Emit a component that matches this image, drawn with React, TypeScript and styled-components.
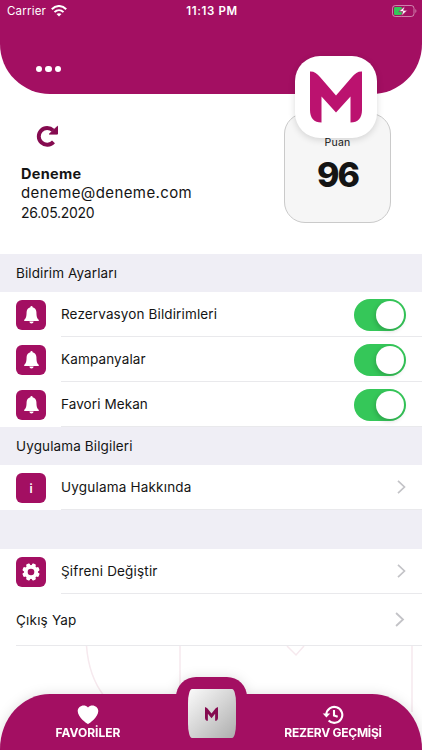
import React from "react";
import styled, { createGlobalStyle } from "styled-components";

const BRAND = "#a30f62";

const GlobalStyle = createGlobalStyle`
  *, *::before, *::after { box-sizing: border-box; }
  body { margin: 0; background: #fff; overflow: hidden; }
`;

const Screen = styled.div`
  width: 422px;
  height: 750px;
  display: flex;
  flex-direction: column;
  overflow: hidden;
  background: #fff;
  color: #141414;
  font-family: Inter, "Liberation Sans", sans-serif;
`;

const Text = styled.span<{ $size: number; $weight?: number; $spacing?: number; $line?: number }>`
  font-size: ${(p) => p.$size}px;
  font-weight: ${(p) => p.$weight ?? 400};
  letter-spacing: ${(p) => p.$spacing ?? 0}px;
  line-height: ${(p) => (p.$line ? `${p.$line}px` : "normal")};
  white-space: nowrap;
`;

const Header = styled.header`
  flex: none;
  height: 94px;
  border-radius: 0 0 50px 50px;
  background: ${BRAND};
  color: #fff;
`;

const StatusBar = styled.div`
  height: 22px;
  display: grid;
  grid-template-columns: 1fr auto 1fr;
  align-items: center;
  padding: 0 5px 0 7px;
`;

const Carrier = styled.div`
  display: flex;
  align-items: center;
  gap: 5px;
`;

const Battery = styled.svg`
  justify-self: end;
`;

const MenuDots = styled.div`
  display: flex;
  gap: 3px;
  padding: 44px 0 0 36px;
`;

const Dot = styled.i`
  width: 6.3px;
  height: 6.3px;
  border-radius: 50%;
  background: #fff;
`;

const Profile = styled.section`
  flex: none;
  height: 160px;
  display: flex;
  justify-content: space-between;
  padding: 0 31px 0 21px;
`;

const Person = styled.div`
  display: flex;
  flex-direction: column;
  padding-top: 31px;
`;

const Refresh = styled.svg`
  margin: 0 0 17px 15px;
`;

const Score = styled.div`
  position: relative;
  width: 107px;
  height: 110px;
  margin-top: 19px;
  padding-top: 22px;
  border: 1px solid #cacaca;
  border-radius: 21px;
  background: #f6f6f6;
  display: flex;
  flex-direction: column;
  align-items: center;
`;

const AppBadge = styled.div`
  position: absolute;
  top: -58px;
  left: 10px;
  width: 82px;
  height: 82px;
  border-radius: 25px;
  background: #fff;
  box-shadow: 0 2px 7px rgba(0, 0, 0, 0.14);
  display: grid;
  place-items: center;
`;

const SectionTitle = styled.h2<{ $height: number }>`
  flex: none;
  height: ${(p) => p.$height}px;
  margin: 0;
  padding-left: 16px;
  display: flex;
  align-items: center;
  background: #efeef5;
`;

const Row = styled.div<{ $height: number }>`
  flex: none;
  height: ${(p) => p.$height}px;
  display: flex;
  padding-left: 16px;
  background: #fff;
`;

const Tile = styled.div`
  width: 30px;
  height: 30px;
  margin: 8px 15px 0 0;
  border-radius: 6px;
  background: ${BRAND};
  color: #fff;
  display: grid;
  place-items: center;
`;

const RowBody = styled.div<{ $end?: number }>`
  flex: 1;
  display: flex;
  align-items: center;
  justify-content: space-between;
  padding-right: ${(p) => p.$end ?? 16}px;
  border-bottom: 1px solid #e9e9ec;
`;

const Switch = styled.div`
  width: 52px;
  height: 32px;
  margin-top: 1px;
  padding: 2px;
  border-radius: 16px;
  background: #35c759;
  display: flex;
  justify-content: flex-end;
`;

const Knob = styled.div`
  width: 28px;
  height: 28px;
  border-radius: 50%;
  background: #fff;
  box-shadow: -1px 2px 5px rgba(0, 0, 0, 0.18);
`;

const Footer = styled.footer`
  position: relative;
  flex: 1;
  display: flex;
  flex-direction: column;
  justify-content: flex-end;
`;

const Pattern = styled.svg`
  position: absolute;
  inset: 0;
`;

const TabBar = styled.nav`
  position: relative;
  height: 56px;
  border-radius: 50px 50px 0 0 / 55px 55px 0 0;
  background: ${BRAND};
  color: #fff;
  display: grid;
  grid-template-columns: 176px 71px 1fr;
  filter: drop-shadow(0 0 6px rgba(0, 0, 0, 0.12));
`;

const Tab = styled.div<{ $shift?: number }>`
  display: flex;
  flex-direction: column;
  align-items: center;
  padding-top: 11px;
  padding-right: ${(p) => p.$shift ?? 0}px;
`;

const HomeTab = styled.div`
  height: 73px;
  margin-top: -17px;
  padding-top: 12px;
  border-radius: 20px 20px 0 0;
  background: ${BRAND};
  display: flex;
  justify-content: center;
`;

const HomeTile = styled.div`
  width: 48px;
  height: 49px;
  border-radius: 4px / 14px;
  background: linear-gradient(135deg, #f7f7f7 5%, #d6d6d6 48%, #adadad 100%);
  display: grid;
  place-items: center;
`;

const BrandM = ({ width, height, fill }: { width: number; height: number; fill: string }) => (
  <svg width={width} height={height} viewBox="0 0 52 52" preserveAspectRatio="none">
    <path
      fill={fill}
      d="M0 .5C4 .3 7 2.300 10 6L26 24.500 42 6C45 2.300 48 .3 52 .5V39C52 47 48 51.500 40.500 51.500V25.500L26 41.500 11.500 25.500V51.500C4 51.500 0 47 0 39Z"
    />
  </svg>
);

const Bell = () => (
  <svg width="15" height="18" viewBox="0 0 15 18" fill="#fff">
    <path d="M7.500 0a1.100 1.100 0 0 0-1.100 1.200C3.900 1.700 2.700 3.700 2.600 6.100c-.1 4.500-.5 6.300-2.300 7.700-.5.500-.2 1.100.4 1.100h13.600c.6 0 .9-.6.4-1.100-1.800-1.400-2.200-3.200-2.300-7.700-.1-2.400-1.300-4.400-3.800-4.900A1.100 1.100 0 0 0 7.500 0Z" />
    <path d="M5.400 15.600h4.200c-.1 1.200-.9 2-2.100 2s-2-.8-2.100-2Z" />
  </svg>
);

const Gear = () => (
  <svg width="18" height="18" viewBox="-9 -9 18 18">
    <g fill="#fff">
      {[22.5, 67.5, 112.5, 157.5].map((angle) => (
        <rect key={angle} x="-2" y="-8.700" width="4" height="17.400" rx="1.100" transform={`rotate(${angle})`} />
      ))}
      <circle r="7.100" />
    </g>
    <circle r="3.300" fill={BRAND} />
  </svg>
);

const Chevron = ({ size = 14 }: { size?: number }) => (
  <svg width={size * 0.64} height={size} viewBox="0 0 9 14" fill="none" stroke="#c3c3c7" strokeWidth="1.700">
    <path d="M1 .9 7.500 7 1 13.100" />
  </svg>
);

const switches = [
  { label: "Rezervasyon Bildirimleri", spacing: 0.13 },
  { label: "Kampanyalar", spacing: 0.14 },
  { label: "Favori Mekan", spacing: 0.09 },
];

export default function App() {
  return (
    <Screen>
      <GlobalStyle />
      <Header>
        <StatusBar>
          <Carrier>
            <Text $size={11.5} $spacing={0.2}>Carrier</Text>
            <svg width="16" height="12" viewBox="0 0 16 12" fill="none" stroke="#fff" strokeWidth="2">
              <path d="M.8 4.200C5-.1 11-.1 15.200 4.200" />
              <path d="M3.500 7.100c2.600-2.500 6.400-2.500 9 0" />
              <path d="M8 11.600 5.500 9.100c1.400-1.300 3.600-1.300 5 0Z" fill="#fff" stroke="none" />
            </svg>
          </Carrier>
          <Text $size={11.5} $weight={600} $spacing={0.6}>11:13 PM</Text>
          <Battery width="25" height="12" viewBox="0 0 25 12">
            <rect x=".5" y=".5" width="21.500" height="11" rx="2.800" fill="none" stroke="#fff" strokeOpacity=".48" />
            <path d="M23.400 4c1.300.5 1.300 3.500 0 4Z" fill="#fff" fillOpacity=".5" />
            <rect x="2" y="2" width="8" height="8" rx="1.200" fill="#35c759" />
            <path d="M13 1 6.800 6.600h3.900L9.400 11l6-5.700h-3.800Z" fill="#fff" stroke={BRAND} strokeWidth=".7" />
          </Battery>
        </StatusBar>
        <MenuDots><Dot /><Dot /><Dot /></MenuDots>
      </Header>

      <Profile>
        <Person>
          <Refresh width="22" height="22" viewBox="0 0 22 22">
            <path d="M17.500 16.900a8.400 8.400 0 1 1-.4-11.500" fill="none" stroke="#850b50" strokeWidth="3.900" />
            <path d="M21.500 1.300v7.800h-8.200Z" fill="#850b50" stroke="#850b50" strokeWidth="1" />
          </Refresh>
          <Text $size={14.5} $weight={700} $line={19} $spacing={0.3}>Deneme</Text>
          <Text $size={15} $line={20} $spacing={0.4}>deneme@deneme.com</Text>
          <Text $size={14} $line={19} $spacing={-0.28}>26.05.2020</Text>
        </Person>
        <Score>
          <Text $size={10.5} $line={14} $spacing={0.25}>Puan</Text>
          <Text $size={34} $weight={800} $line={49} $spacing={-2}>96</Text>
          <AppBadge><BrandM width={52} height={52} fill="#bb126f" /></AppBadge>
        </Score>
      </Profile>

      <SectionTitle $height={38}><Text $size={13.5} $spacing={0.1}>Bildirim Ayarları</Text></SectionTitle>
      {switches.map(({ label, spacing }) => (
        <Row key={label} $height={45}>
          <Tile><Bell /></Tile>
          <RowBody>
            <Text $size={13.5} $spacing={spacing}>{label}</Text>
            <Switch><Knob /></Switch>
          </RowBody>
        </Row>
      ))}
      <SectionTitle $height={38}><Text $size={13.5} $spacing={0.13}>Uygulama Bilgileri</Text></SectionTitle>
      <Row $height={45}>
        <Tile><Text $size={12} $weight={600}>i</Text></Tile>
        <RowBody>
          <Text $size={13.5} $spacing={0.2}>Uygulama Hakkında</Text>
          <Chevron />
        </RowBody>
      </Row>
      <SectionTitle $height={39} />
      <Row $height={45}>
        <Tile><Gear /></Tile>
        <RowBody>
          <Text $size={13.5} $spacing={0.18}>Şifreni Değiştir</Text>
          <Chevron />
        </RowBody>
      </Row>
      <Row $height={52}>
        <RowBody $end={17}>
          <Text $size={13.5} $spacing={0.2}>Çıkış Yap</Text>
          <Chevron size={15} />
        </RowBody>
      </Row>

      <Footer>
        <Pattern width="422" height="104" viewBox="0 0 422 104" fill="none" stroke="#f6e9ee" strokeWidth="1.500">
          <path d="M86.500 0C88 20 94 37 104 50M180 0V48M412 0V66M287 0l9 9 8-9" />
        </Pattern>
        <TabBar>
          <Tab>
            <svg width="22" height="20" viewBox="0 0 22 20" fill="#fff">
              <path d="M11 19.200C9.700 18.500.7 12.400.7 6.100.7 1.200 7.300-1.600 11 2.500c3.700-4.100 10.300-1.300 10.300 3.600 0 6.300-9 12.400-10.300 13.100Z" />
            </svg>
            <Text $size={12} $weight={700} $line={15}>FAVORİLER</Text>
          </Tab>
          <HomeTab>
            <HomeTile><BrandM width={13} height={14} fill="#850b50" /></HomeTile>
          </HomeTab>
          <Tab $shift={3}>
            <svg width="22" height="20" viewBox="0 0 22 20" fill="none" stroke="#fff" strokeWidth="2.100">
              <path d="M4.300 9.500a8 8 0 1 1 2.300 6" />
              <path d="M.7 8.400h7.500L4.400 12.600Z" fill="#fff" stroke="none" />
              <path d="M12 5v5.400l3.700 1.400" />
            </svg>
            <Text $size={12} $weight={700} $line={15} $spacing={-0.25}>REZERV GEÇMİŞİ</Text>
          </Tab>
        </TabBar>
      </Footer>
    </Screen>
  );
}
